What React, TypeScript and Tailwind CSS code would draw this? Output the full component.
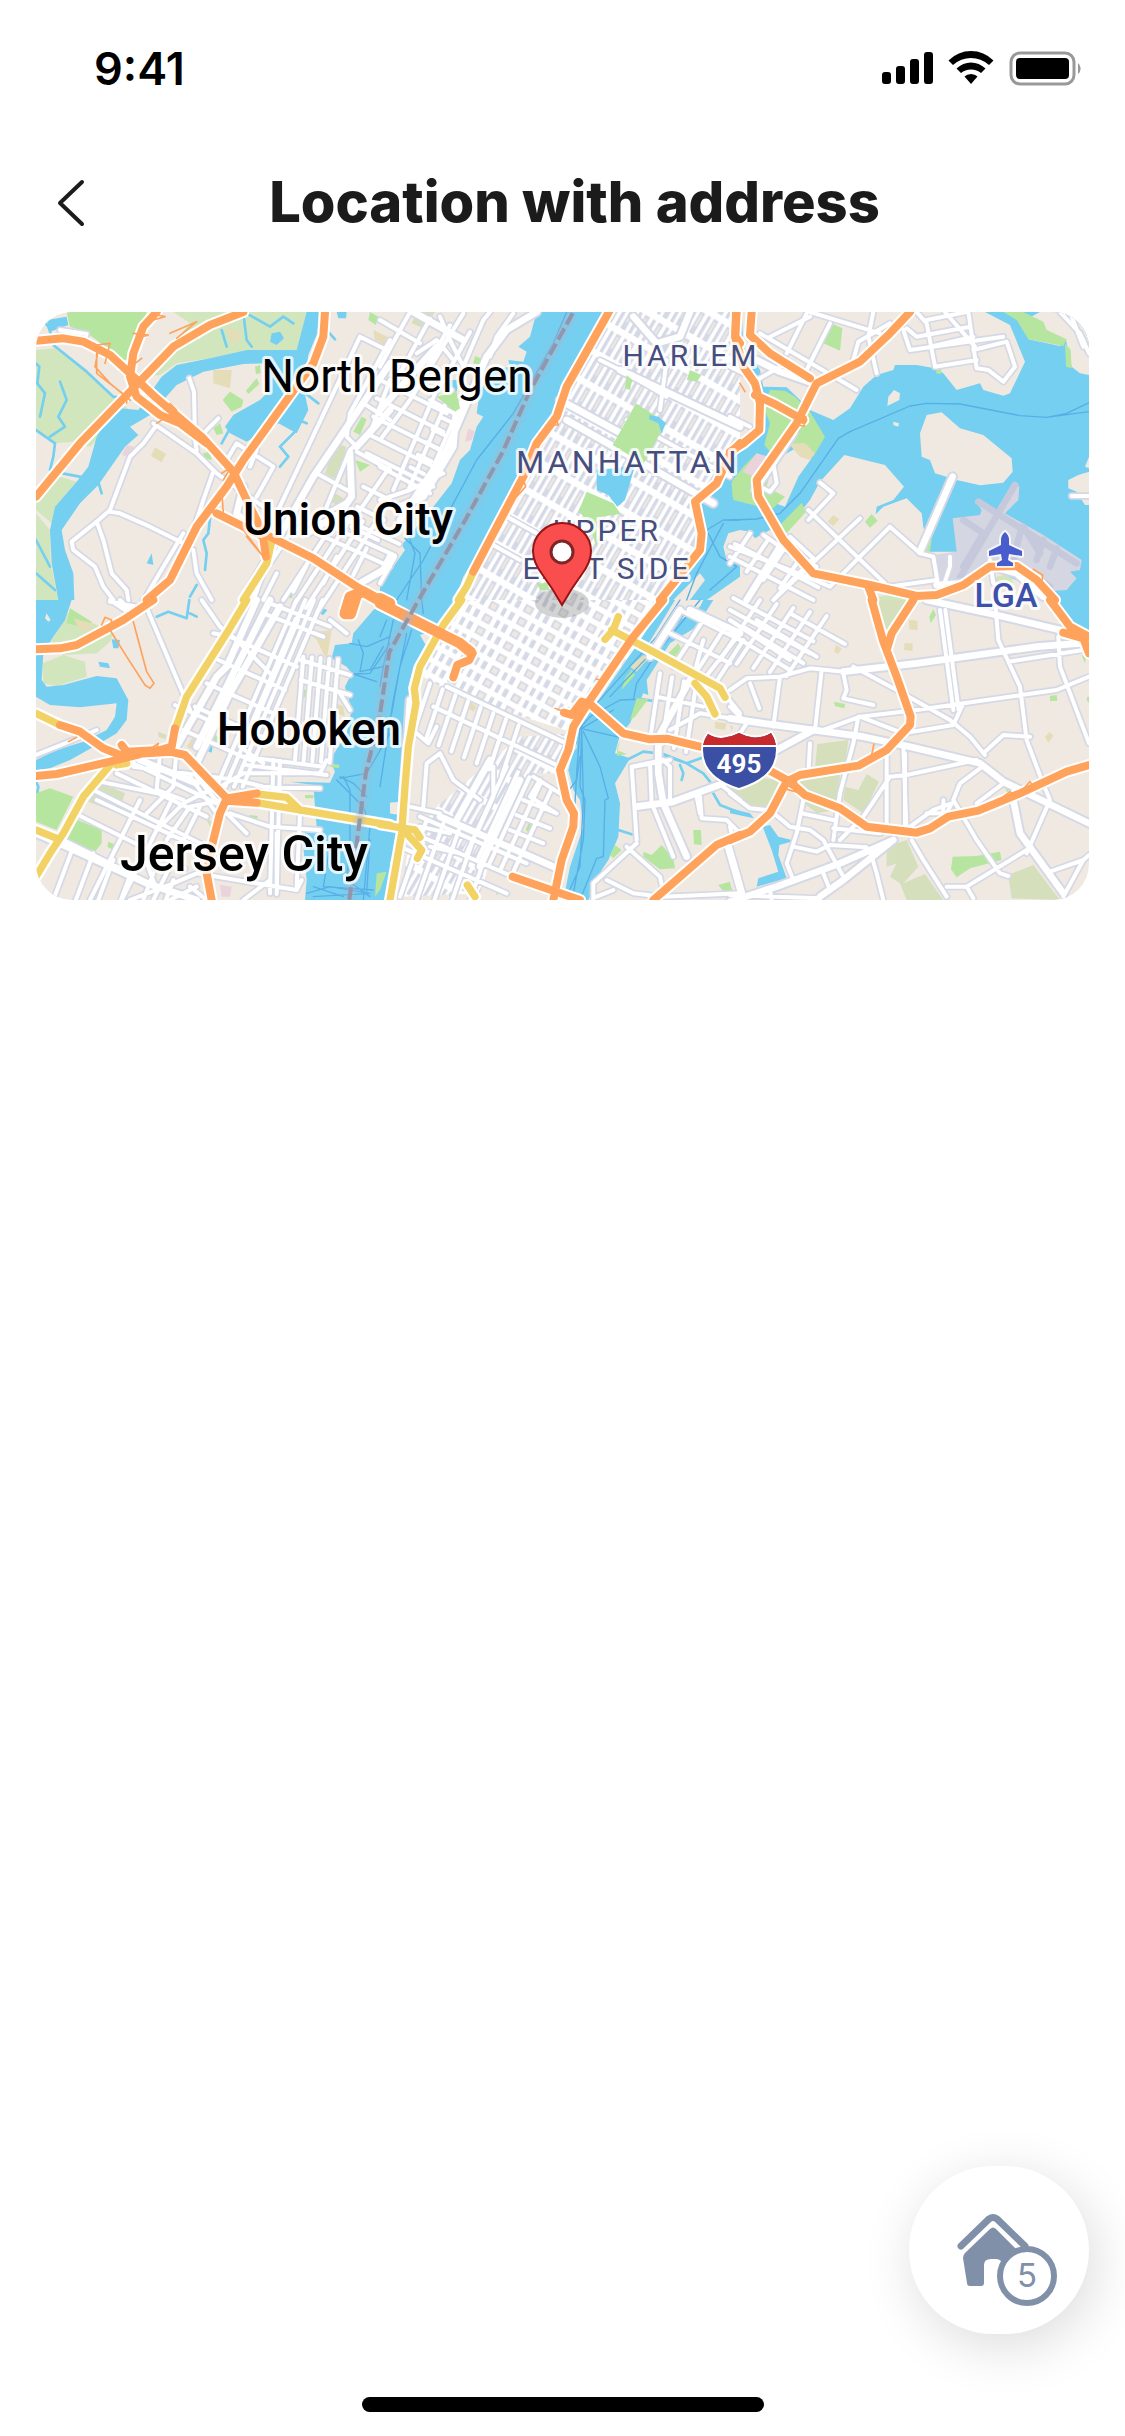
import React from 'react'

/* Parallel streets: x1, y1, x2, y2 of the first one, step dx, dy, and how many. */
type Hatch = [number, number, number, number, number, number, number]

type Tile = {
  x: number
  y: number
  water?: string
  creeks?: string[]
  land?: string
  green?: string
  pale?: string
  olive?: string
  sand?: string
  pink?: string
  apron?: string
  runways?: string[]
  blocks?: string
  midtown?: string
  channels?: string[]
  hatches?: Hatch[]
  streets?: string[]
  avenues?: string[]
  trunks?: string[]
  motorways?: string[]
  heavy?: string[]
  ramps?: string[]
}

const tiles: Tile[] = [
  {
    x: -18,
    y: -36,
    pale:
      'M18,150 75,145 180,220 260,300 300,330 210,410 180,440 130,425 75,430 18,390Z M430,36 600,36 850,36 800,150 650,150 540,175 440,190 390,225 340,230 420,140 480,70Z M18,560 90,530 140,545 75,620 65,670 18,630Z M18,640 60,690 62,790 85,900 18,900Z',
    green:
      'M110,36 350,36 320,130 300,180 265,180 200,120 165,95 120,80Z M600,275 640,300 635,320 605,335 578,300Z M680,235 688,252 655,282 648,272Z M1020,36 1045,50 1038,75 1015,60Z M995,350 1010,358 990,405 970,395Z M975,480 1020,495 990,515Z M550,385 570,370 580,400 560,405Z M520,460 540,455 545,480 522,475Z M675,200 690,195 692,220 678,222Z M775,880 790,882 785,895 770,893Z',
    olive: 'M915,430 948,440 930,545 885,520Z M900,570 940,595 930,618 888,600Z',
    sand: 'M550,210 605,210 600,265 550,250Z M375,442 408,462 395,487 363,468Z M1030,90 1080,115 1060,130 1035,120Z M590,75 635,100 620,130 600,125Z',
    pink: 'M290,435 312,440 300,470 275,465Z',
    water:
      'M830,36 H866 L862,100 835,165 820,260 835,330 800,400 745,370 700,395 650,425 600,400 585,380 610,345 690,300 720,270 705,240 700,190 640,192 520,215 440,255 400,300 360,345 300,380 325,405 285,440 240,505 205,555 150,610 95,690 105,750 130,820 133,900 85,900 65,790 60,690 75,620 140,545 175,500 200,410 240,345 270,325 325,330 360,280 395,230 440,195 540,175 650,150 800,150Z M50,60 110,50 115,75 60,95Z M725,100 750,95 762,115 740,135 720,125Z M920,36 H950 L948,55 925,55Z M365,760 370,795 350,790Z',
    creeks: [
      '70,135 170,215 250,290 300,300', '20,36 55,80 75,140', '18,190 28,200 22,250 45,280 30,350', '18,390 75,430 70,470 60,510', '70,515 160,532',
      '540,655 535,700 520,720 530,760 525,810', '795,395 750,440 775,470 750,500', '500,855 480,890', '90,245 110,300 85,350 105,380 60,410', '640,40 650,120 665,140',
      '18,720 60,800', '18,820 75,870', '200,530 215,580', '780,350 830,370', '800,260 865,310', '575,430 600,385', '590,140 575,90', '890,90 915,118', '650,40 720,80 760,50 790,70',
    ],
    hatches: [
      [930, 640, 760, 900, 34, 12, 4], [860, 700, 1080, 800, 14, -34, 3], [1000, 560, 1080, 600, -18, 60, 3], [740, 820, 700, 900, 90, -25, 4],
    ],
    streets: [
      '370,370 500,460 560,520 700,620', '380,375 340,430 300,470 240,630 200,665 125,725 130,750 195,800 220,860 250,900', '240,635 270,640 360,680 460,730',
      '478,235 492,275 495,420 500,450', '500,430 530,390 565,355', '548,520 520,600 490,690', '460,700 400,800 350,885', '200,665 220,720 245,820 290,870 295,900',
      '490,750 500,820 545,900', '680,590 730,500 620,430 590,480', '740,640 990,110 1070,150', '1080,120 960,340 950,410 980,440', '1000,310 1080,360', '860,520 960,575',
      '980,455 1080,510', '670,900 700,820 780,700 960,600', '1080,240 1020,400 960,450 890,620', '1080,500 990,630', '680,450 660,500', '90,90 170,102 160,125 80,110',
    ],
    avenues: ['1080,190 850,530 640,900', '960,460 965,590 930,640 830,700', '640,560 620,640 680,700', '1080,330 980,440', '990,850 1060,810 1080,770'],
    trunks: ['725,725 710,790 640,900'],
    motorways: [
      '18,122 100,115 160,125 240,165 300,220 380,295 520,415 610,515 650,600 700,700 850,775 980,860 1080,915', '640,36 540,75 430,140 310,265 150,430 18,590',
      '380,36 340,80 310,160 300,230 320,290 390,345 450,370 530,430', '885,36 880,110 850,190 640,480 590,560 500,680 420,840 350,900', '560,640 640,680 700,710', '700,715 708,770',
    ],
    heavy: ['1080,920 1000,875 960,890 945,940'],
    ramps: [
      '200,155 200,220 290,290 290,310', '205,150 195,200 240,250 300,300', '420,100 500,65 440,115', '310,100 355,105 320,115 330,85', '290,210 335,175', '380,370 440,330 420,310',
      '560,610 575,570 580,640 530,635', '650,710 700,770 640,690', '575,520 600,505 580,540', '200,135 240,130 225,190', '380,45 405,50 370,60',
    ],
  },
  {
    x: 1032,
    y: -36,
    water:
      'M470,36 H690 L640,120 560,260 525,350 470,430 430,520 340,700 275,790 250,830 225,900 H0 V830 L40,800 75,750 65,735 160,620 215,550 240,480 270,450 290,380 310,350 290,340 300,270 340,210 390,200 385,180 430,185 440,155 415,140 450,110Z M1080,450 1040,490 1000,570 955,605 975,720 940,790 880,870 860,900 H1080Z M205,240 235,240 230,275 205,270Z M1030,205 1060,225 1080,290 1040,230Z',
    land: 'M1080,690 1045,700 1030,740 1040,780 1080,790Z M880,900 960,820 975,840 930,900Z M980,900 1080,830 V900Z',
    sand: 'M0,100 20,120 15,145 0,130Z M845,36 H860 L850,60Z',
    pink: 'M265,385 285,395 275,420 255,425Z M1000,50 1030,50 1025,65 1000,62Z',
    olive: 'M110,36 165,36 130,85 95,70Z',
    blocks: 'M690,36 H1060 L1080,240 V450 L1040,480 1000,570 950,600 960,720 860,900 H230 L280,800 340,700 430,540 530,370 580,260Z',
    channels: [
      '560,36 520,130 400,340 290,480 215,620 130,780 50,900', '75,715 120,760 125,900', '90,720 105,760 80,900', '1080,660 1030,660 980,690 960,740', '985,700 1020,770 1070,800 990,870', '1030,670 950,820 920,900',
    ],
    hatches: [
      [90, 36, 0, 200, 60, 20, 4], [0, 240, 200, 340, -10, 55, 5], [260, 270, 130, 570, -45, 0, 3], [180, 350, 220, 370, -22, 38, 5],
    ],
    streets: [
      '180,50 210,120 250,200 310,60 330,36', '110,160 170,120 220,180', '0,420 90,300 250,40', '0,500 150,580', '0,600 90,570 190,520', '150,300 240,350', '0,60 120,130', '400,40 350,110 330,170',
      '45,770 0,850', '380,650 470,700', '330,730 420,780', '740,360 1050,530', '660,180 740,220 860,290', '860,180 840,330',
    ],
    avenues: ['470,36 380,90 320,170 200,450 60,660', '230,310 220,440 130,590 60,620', '0,330 170,140', '100,36 250,120', '760,50 830,130 900,110 930,36', '720,210 1080,380', '560,360 1000,610', '540,300 760,420'],
    trunks: ['280,815 260,860 235,900'],
    motorways: ['690,30 560,260 530,350 470,430 430,530 340,700 280,815', '1068,36 1066,110 1080,130', '1080,430 1050,460 1010,550 945,605 965,700 960,750 840,900'],
    heavy: ['0,895 30,910'],
    ramps: ['425,520 437,560 410,590', '530,360 535,375 520,375'],
  },
  {
    x: 2082,
    y: -36,
    water:
      'M765,36 840,75 885,185 840,280 820,287 760,270 750,250 680,270 640,220 615,205 560,195 495,195 490,210 440,225 400,260 360,325 310,360 240,330 200,290 170,262 100,260 90,210 60,160 40,140 35,36 18,36 25,190 60,230 90,300 88,390 0,450 V690 L30,690 60,695 75,715 120,690 165,695 240,600 270,545 343,465 465,495 522,560 490,600 440,620 437,643 460,620 530,595 575,640 580,680 600,755 680,755 900,860 975,900 H1077 V36Z M0,790 15,820 0,850Z',
    land:
      'M590,345 635,337 690,385 760,405 845,475 848,515 820,548 750,556 680,540 615,520 600,480 575,470 570,400Z M475,290 492,270 510,280 508,300 472,318Z M490,365 507,370 505,380 490,375Z M885,60 930,36 H1077 V225 L1050,220 1025,200 1008,120 990,138 895,118Z M1077,470 1065,500 1077,505Z M1077,515 1045,525 1015,540 1015,565 1040,575 1065,615 H1077Z M135,480 205,440 245,475 205,530 165,620 110,600 90,560Z',
    green:
      'M820,36 H880 L940,65 950,90 1010,118 1000,138 895,118 860,60Z M310,72 337,85 330,152 280,130Z M120,270 165,272 195,290 240,335 285,410 250,470 200,430 130,440 120,455 103,435 120,370 100,320Z M5,545 40,500 80,460 130,480 110,560 165,590 130,625 90,620 10,600Z M215,608 228,635 170,700 130,695Z M425,642 443,662 420,683 405,665Z M590,700 605,720 600,755 580,755Z M1005,130 1022,150 1025,205 1008,200Z M620,208 635,208 632,222 618,220Z M0,410 20,405 25,425 0,440Z',
    pale: 'M440,890 520,880 540,900 450,900Z M800,830 840,820 850,850 790,850Z',
    sand: 'M175,430 225,430 255,460 240,480 210,470Z M310,645 328,658 310,678 293,665Z M1050,222 1077,220Z',
    pink: 'M80,460 115,470 70,530 38,515Z',
    apron:
      'M668,655 750,645 755,630 740,610 750,598 800,630 850,545 868,560 865,600 825,640 940,705 1055,780 1050,810 1020,815 1040,835 1010,870 975,872 880,800 780,800 690,860 630,865 610,765 680,755Z',
    runways: ['855,555 680,850', '745,605 1040,790', '700,660 760,700 700,800', '870,700 850,780 960,860', '880,680 930,760', '940,720 920,780', '980,745 960,800'],
    channels: ['0,660 80,657 150,640 210,580 325,415 360,395 540,318 590,310 690,312 870,347 950,352 1077,335', '950,352 1010,340 1077,308'],
    hatches: [
      [0, 790, 60, 700, 50, 25, 4], [0, 770, 250, 900, 15, -38, 2],
    ],
    streets: [
      '240,36 450,100', '240,50 120,110', '300,70 230,210', '230,40 170,160', '90,100 380,270', '430,36 415,110 440,220', '370,180 385,125 480,70', '520,90 540,150 820,110', '560,36 590,70 615,200 740,180',
      '530,85 560,110 720,80', '590,60 710,36', '715,36 740,205 775,210 820,245 855,200 830,125 730,150', '645,36 735,140', '600,140 730,110', '990,36 1050,100 1077,160', '1020,36 1060,140', '270,548 310,580 235,660', '390,655 130,900', '235,630 475,860 620,840',
      '100,705 150,740 260,800', '180,710 250,775 130,900', '480,680 570,760 610,770 625,860', '478,682 300,860', '1025,588 1077,588', '0,740 230,830 300,860', '0,200 80,240 170,190', '130,490 140,550 120,575 100,565', '660,770 660,800 640,860', '780,780 790,850 830,860', '0,350 60,380',
    ],
    avenues: ['80,180 150,215 235,245', '668,530 570,755', '190,400 75,570', '150,740 50,900', '620,855 700,850 790,800 860,820 940,890'],
    motorways: [
      '20,36 15,110 40,200 75,250 90,310 88,390 40,430 0,455', '65,36 60,105 120,160 240,235', '540,36 480,100 390,185 260,250 200,370 80,540 85,590 160,720 250,820 420,855 560,888 620,885 700,855 780,800 860,798 920,840 975,900', '75,285 130,310 220,360', '415,860 430,900',
    ],
    ramps: ['190,350 228,350 222,378 200,375', '910,808 938,825 935,860', '30,250 45,275'],
  },
  {
    x: -18,
    y: 864,
    water:
      'M18,0 H125 L105,60 70,110 40,160 35,240 50,260 100,255 200,228 260,235 295,300 290,360 260,400 210,430 120,480 60,505 18,510 V480 L80,450 160,425 230,390 255,350 260,310 150,322 60,315 18,290Z M1080,0 1030,30 970,100 965,130 915,135 905,175 950,200 965,220 945,260 965,330 950,400 900,480 915,515 900,548 780,545 850,555 855,620 860,680 815,690 820,740 830,840 825,900 H1080Z M245,118 270,120 265,145 250,145Z M205,185 235,190 240,205 210,200Z M535,425 550,430 545,458 525,450Z M870,20 892,30 880,45 862,38Z',
    creeks: ['380,50 415,35 470,55 478,0', '480,40 500,50', '18,545 25,560 18,600'],
    land: 'M50,40 62,60 55,65 45,55Z',
    pale: 'M120,30 190,70 250,100 240,125 200,160 100,165 60,130Z M100,165 165,185 170,230 80,258 40,250 38,190Z',
    green: 'M120,25 185,65 180,85 110,70Z M18,580 60,565 130,590 80,690 18,665Z M120,650 215,690 215,730 195,755 110,715Z M690,222 705,240 685,235Z M815,268 830,270 825,292 812,290Z M550,395 570,420 555,430 540,415Z M590,640 605,635 605,650 590,650Z M658,645 683,648 680,660 658,658Z M440,872 455,885 440,900 422,890Z M900,490 930,495 925,505 900,500Z M825,585 850,585 850,595 825,595Z M235,725 258,735 250,750 232,740Z M945,262 955,285 965,290 945,300Z M1040,820 1070,815 1050,870 1035,890Z M485,325 497,318 497,328Z',
    sand: 'M495,400 520,415 500,455 470,440Z M920,310 940,320 945,350 920,340Z M130,55 185,70 180,95 150,90Z M835,100 905,90 890,180 860,120Z',
    olive: 'M215,550 285,580 265,640 175,605Z M385,395 410,405 405,418 385,410Z M530,660 560,665 545,690Z',
    pink: 'M570,855 605,860 600,890 575,890Z',
    channels: [
      '1080,130 1020,220 970,222', '970,222 1040,245', '985,120 1000,160 990,215 1060,200', '960,130 1010,140 1080,110', '930,530 970,550 1010,590', '920,540 1000,620 1020,680 1000,900', '940,530 960,570 960,720', '1080,400 1010,520 930,535', '830,880 900,860 1020,880 850,890', '900,740 880,860 1030,870', '960,740 950,840 1020,890', '1020,720 1010,880', '850,860 940,890', '1060,140 1020,210',
    ],
    hatches: [
      [820, 170, 795, 480, 26, 2, 5], [812, 180, 960, 225, 0, 60, 2], [800, 0, 560, 560, 26, 0, 4], [600, 110, 800, 200, -35, 70, 5], [640, 470, 880, 500, 10, 25, 2], [130, 740, 70, 900, 60, 20, 6],
      [100, 720, 420, 880, 45, -75, 3], [700, 40, 880, 110, 20, -30, 2], [330, 600, 180, 900, 90, 10, 3], [290, 480, 560, 610, -30, 40, 2], [730, 480, 720, 880, 20, 2, 2],
    ],
    streets: [
      '340,0 480,330', '515,0 570,80 620,120 720,220', '550,100 600,110', '435,315 600,390', '18,465 130,420 200,390', '240,0 300,40', '240,5 320,20', '270,0 300,30', '390,460 380,570 460,600', '440,450 430,560 350,640', '500,530 590,640 650,700', '310,500 620,540 700,560 870,565', '600,640 720,680 870,690', '480,530 560,640', '570,560 640,520 870,520 890,480', '630,440 700,490',
      '380,690 460,610 560,560', '410,720 480,620 580,600', '210,545 430,590', '200,600 500,740', '300,900 430,850 500,820 800,870 815,840', '340,760 380,870', '420,900 500,860', '810,640 800,860', '740,700 740,860', '480,860 530,900', '930,280 960,330', '640,900 720,840', '900,60 950,100',
    ],
    avenues: ['680,0 590,200 560,230 440,440', '720,0 500,440', '800,60 640,440', '18,700 110,740 350,850 500,900', '750,20 600,280 500,490', '330,480 500,550'],
    trunks: ['650,0 590,100 470,290 435,390', '18,340 90,375', '245,490 160,590 100,700 60,760 18,830', '18,690 80,715', '680,582 770,592 810,630', '680,608 840,635 1080,675', '260,495 290,490'],
    motorways: ['370,0 280,60 140,135 90,145 18,148', '90,375 150,395 220,445 270,465 420,455 465,465 590,595 570,640 545,740 530,820 545,900', '18,528 80,522 240,485 340,460', '435,385 425,440 390,450 290,455 275,435', '590,595 680,580', '590,602 680,608'],
    heavy: ['960,-8 945,42 962,42 978,-8', '1060,12 1080,20'],
    ramps: ['215,75 225,52 245,60 240,90 290,170 345,255 360,265 372,250 350,215 310,65', '370,440 385,430 380,445', '115,425 140,412'],
  },
  {
    x: 1032,
    y: 864,
    water:
      'M0,0 H240 L200,60 150,95 120,105 140,140 100,200 85,260 90,330 80,440 65,520 60,605 25,608 25,640 60,645 60,700 40,760 20,820 0,818Z M1000,0 860,0 760,150 650,310 600,380 565,510 580,570 600,600 610,680 570,800 550,900 H625 L665,810 685,780 715,710 720,610 705,550 750,475 705,460 720,405 750,370 790,280 805,285 800,240 870,130 950,80Z',
    creeks: ['740,480 790,455 850,462 920,490 970,520 990,545', '850,465 920,490 990,465', '900,495 910,520 905,540', '1000,580 1020,615 1080,638', '770,295 820,303', '715,690 755,703'],
    land: 'M885,0 970,0 960,20 900,60 840,150 800,140Z',
    sand: 'M790,165 805,175 770,215 750,200Z M220,580 290,620 260,670 200,640Z M270,305 290,320 280,335 262,322Z M1005,365 1040,370 1035,390 1005,385Z',
    green: 'M755,210 765,225 725,270 735,235Z M770,295 805,297 765,350 750,360Z M720,420 710,450 740,462 710,468Z M895,130 903,145 885,170 865,160Z M845,735 880,775 885,805 840,808 790,770 790,755 815,765Z M940,690 963,690 965,735 942,733Z M1015,855 1050,845 1055,870 1030,875Z M225,580 270,595 260,620 218,605Z M450,660 465,668 450,700 437,690Z M705,735 725,750 700,775 690,765Z M420,205 438,215 430,222Z M340,495 330,530 320,525Z M640,840 635,870 625,890Z M210,855 220,880 210,890 200,870Z M345,865 365,875 350,885Z',
    midtown: 'M270,0 H860 L760,150 640,310 600,380 585,400 240,290 165,250 110,220 125,160 200,80Z',
    blocks: 'M420,410 585,400 570,470 545,520 470,520 500,470 350,720 300,880 60,890 90,720 170,620Z',
    channels: [
      '600,385 590,520 580,700', '605,390 600,560 615,600 610,720 580,880', '605,390 610,600 600,800 560,890', '610,395 660,500 685,595 675,600 670,770 650,775 600,900', '600,385 630,350 720,300 765,298', '605,385 700,330', '600,385 720,412', '650,310 830,110 900,0', '690,290 860,110 930,20', '760,300 770,250 830,160 960,0', '560,580 590,540 600,470',
      '40,60 10,200 0,260', '20,60 0,110', '80,100 40,300 0,560', '95,90 60,200 35,340', '125,0 130,40',
    ],
    hatches: [
      [150, 250, 100, 400, 38, 18, 8], [160, 320, 540, 500, 40, -60, 2], [380, 500, 260, 760, 34, 16, 5], [90, 620, 180, 640, 30, 60, 3], [140, 660, 60, 890, 50, 10, 5], [60, 740, 380, 880, 30, -45, 3], [430, 600, 530, 640, -20, 45, 4],
      [840, 220, 810, 420, 36, 12, 4], [760, 500, 870, 480, 0, 0, 1], [970, 60, 880, 200, 60, 30, 3], [900, 30, 1080, 120, -30, 70, 3],
    ],
    streets: [
      '180,460 140,490 130,620', '180,460 220,540 300,600', '340,500 340,590 290,700', '460,530 540,580', '110,400 145,430 170,380', '755,500 770,720', '755,500 850,480 870,500 870,610', '810,490 815,610 880,770', '770,620 880,610', '770,730 640,850 640,900', '740,740 840,830 850,880', '960,590 965,655 1040,660 1080,700',
      '850,890 1080,880', '680,840 760,880 850,890', '950,590 960,640', '1040,740 1080,880', '830,290 970,320', '970,120 940,230', '1080,100 970,240', '870,390 960,340 1080,360', '1030,560 1080,600', '480,540 450,590 530,640', '700,870 650,890', '1040,290 1080,340',
    ],
    avenues: ['180,650 520,800', '835,420 835,520 850,610 920,770', '770,620 880,605 1030,550', '930,240 830,420', '900,30 810,170', '420,540 300,800', '330,480 230,660', '90,300 70,600', '930,30 1080,100'],
    trunks: ['245,0 190,75 120,200 103,265 108,310 85,440 75,560 65,700 30,900', '0,673 60,683 105,690 120,712', '70,690 125,750 112,775', '715,50 700,90 675,118', '695,90 820,155 1020,265 1035,292', '945,250 980,290 1005,342', '262,855 285,890'],
    motorways: ['278,160 268,180 232,195 220,232', '850,0 760,110 630,300 580,380 565,450 540,510 560,600 582,640 580,680 545,780 520,900', '552,338 575,345 605,305 630,312 730,400 810,418 860,416 960,440', '398,830 600,900', '1080,705 1010,735 820,900'],
    heavy: ['0,10 90,55 240,130 272,156'],
    ramps: ['525,325 545,332', '648,237 662,240'],
  },
  {
    x: 2082,
    y: 864,
    water: 'M975,0 H1077 V95 L1020,75Z M0,625 60,640 72,655 0,640Z M98,680 120,675 145,710 195,722 148,735 145,765 170,835 80,860 85,835 145,815 125,750Z',
    olive: 'M445,0 530,0 480,100 455,80Z M262,432 355,420 345,500 255,500Z M210,530 330,525 320,630 260,640 210,600Z M0,560 60,530 150,540 110,625 60,632 10,580Z M345,560 385,570 410,522 447,545 420,600 400,640 340,600Z M470,740 530,720 565,800 520,850 585,822 640,900 530,900 510,850 480,830 500,790 470,800Z M835,825 910,795 990,900 845,895Z',
    green: 'M668,770 740,768 810,755 815,780 720,805 680,832 663,808Z M312,305 345,312 343,325 315,318Z M670,605 677,625 655,628Z M960,288 980,285 982,302 960,303Z M1072,290 H1077 V308 L1070,300Z M610,28 618,45 602,70 598,50Z M1055,165 1068,170 1065,190Z M0,855 8,870 0,875Z M825,565 840,570 835,580Z',
    sand: 'M537,60 562,62 563,90 537,88Z M523,130 548,130 548,153 523,150Z M318,135 335,145 325,162 312,155Z M960,395 970,408 955,428 945,410Z M0,375 10,380 5,395Z',
    pink: 'M650,345 665,348 660,358 645,355Z',
    hatches: [
      [90, 0, -30, 180, 50, 12, 5], [0, 30, 240, 160, 10, -36, 2], [0, 100, 180, 210, 40, -20, 3], [630, 30, 670, 330, 16, 0, 2], [470, 460, 470, 680, 55, 0, 2],
    ],
    streets: [
      '0,270 50,235 150,230 240,205 340,215', '180,40 345,132', '0,60 180,180', '150,230 130,380', '275,210 255,390', '340,220 350,270 340,295 430,315', '60,250 88,325', '370,200 500,270 660,360 720,410 765,465', '280,390 390,350 560,330 980,270 1077,230', '390,350 520,400 670,375 700,310',
      '385,350 370,430 330,580 310,720', '795,0 805,120 870,260 890,420 935,540 960,600 890,760', '985,110 990,200 1077,430', '835,185 1060,150', '760,460 820,405 900,410', '530,700 520,440', '480,530 530,525 740,480', '480,530 400,650 330,720', '750,505 690,550 670,600 740,720 810,820 835,828', '540,680 610,630 665,610 650,640', '740,610 820,550', '545,720 580,780 650,890', '890,750 710,860 650,860', '710,860 730,895',
      '960,815 1060,780 1077,765', '1060,780 1000,890', '120,630 180,680 240,690 280,720 340,830', '220,600 200,700 170,790 190,840', '215,640 310,660', '190,740 260,755 300,735 410,742', '310,685 450,700', '0,580 60,625 110,630', '420,750 440,820 460,900', '0,740 40,880', '240,430 235,520', '280,820 300,870', '0,680 10,720', '0,885 270,895', '120,870 125,900', '590,640 640,640 640,600', '0,320 50,370 30,400',
    ],
    avenues: ['0,355 100,370 400,410 540,440 750,490 820,545 1077,670', '340,215 560,190 920,140 1050,130', '590,0 800,45 990,90', '850,600 870,700 1000,880', '490,720 330,790 140,860 0,905', '490,720 340,840 270,890', '140,450 250,390'],
    motorways: ['425,0 460,125 500,230 542,350 540,375 470,450 385,497 210,525 170,545 120,640 60,695 0,720', '550,0 485,100 470,150', '120,512 180,545 225,585 330,625 410,680 560,698 600,685 655,650 745,632 870,580 1010,515 1077,495', '960,0 1020,80 1077,110', '1000,98 1060,115 1077,160'],
    ramps: ['820,590 840,575 860,590 900,545 910,560', '432,432 425,465', '150,540 200,545 160,565 215,580 170,555', '170,530 190,565'],
  },
]

const path = (points: string) => `M${points}`
const hatchPath = ([x1, y1, x2, y2, dx, dy, n]: Hatch) =>
  Array.from({ length: n }, (_, i) => `M${x1 + dx * i},${y1 + dy * i} ${x2 + dx * i},${y2 + dy * i}`).join(' ')

const minorPaths = (t: Tile) => [...(t.streets ?? []).map(path), ...(t.hatches ?? []).map(hatchPath)].join(' ')
const join = (lines?: string[]) => (lines ?? []).map(path).join(' ')

const stateLine = 'M1610,4 1480,240 1400,420 1290,620 1150,860 1060,1020 1030,1220 990,1380 940,1764'

function Layer({ d, className }: { d: (t: Tile) => string | undefined; className: string }) {
  return (
    <g className={className} strokeLinecap="round" strokeLinejoin="round">
      {tiles.map((t) => {
        const shape = d(t)
        return shape ? <path key={`${t.x},${t.y}`} d={shape} transform={`translate(${t.x} ${t.y})`} /> : null
      })}
    </g>
  )
}

function MapLabel({ x, y, className, children }: { x: number; y: number; className: string; children: React.ReactNode }) {
  return (
    <text x={x} y={y} textAnchor="middle" paintOrder="stroke" strokeLinejoin="round" className={`stroke-white/80 stroke-6 ${className}`}>
      {children}
    </text>
  )
}

function CityMap() {
  return (
    <svg viewBox="0 0 1053 588" className="block w-full rounded-[36px] bg-[#efe9e2] font-['Roboto',sans-serif]" role="img" aria-label="Map of New York">
      <defs>
        <pattern id="uptown" width="46" height="92" patternUnits="userSpaceOnUse" patternTransform="rotate(30)">
          <rect width="46" height="92" fill="#fff" />
          <rect x="3" y="8" width="10" height="72" fill="#d5d8e5" />
          <rect x="22" y="8" width="16" height="72" fill="#d5d8e5" />
          <rect x="27" y="16" width="6" height="40" fill="#efe9e2" />
        </pattern>
        <pattern id="midtown" width="96" height="42" patternUnits="userSpaceOnUse" patternTransform="rotate(29)">
          <rect width="96" height="42" fill="#fff" />
          <rect x="6" y="7" width="28" height="25" fill="#d5d8e5" />
          <rect x="12" y="12" width="16" height="15" fill="#efe9e2" />
          <rect x="48" y="7" width="12" height="25" fill="#d5d8e5" />
          <rect x="73" y="7" width="14" height="25" fill="#d5d8e5" />
        </pattern>
        <filter id="glow" x="-50%" y="-50%" width="200%" height="200%">
          <feGaussianBlur stdDeviation="6" />
        </filter>
      </defs>

      <g transform="scale(0.33333)" fill="none">
        <Layer d={(t) => t.pale} className="fill-[#d2e6bd]" />
        <Layer d={(t) => t.water} className="fill-[#75cff0]" />
        <Layer d={(t) => join(t.creeks)} className="stroke-[#75cff0] stroke-8" />
        <Layer d={(t) => t.land} className="fill-[#efe9e2]" />
        <Layer d={(t) => t.olive} className="fill-[#d5dfbc]" />
        <Layer d={(t) => t.green} className="fill-[#b5e59e]" />
        <Layer d={(t) => t.sand} className="fill-[#e5dcb8]" />
        <Layer d={(t) => t.pink} className="fill-[#ead3da]" />
        <Layer d={(t) => t.apron} className="fill-[#d4d7e2]" />
        <Layer d={(t) => join(t.runways)} className="stroke-[#c6c9dc] stroke-20" />
        <Layer d={(t) => t.blocks} className="fill-[url(#uptown)]" />
        <Layer d={(t) => t.midtown} className="fill-[url(#midtown)]" />
        <Layer d={(t) => join(t.channels)} className="stroke-[#58aee6] stroke-4" />
        <Layer d={(t) => minorPaths(t)} className="stroke-[#d5d8e5] stroke-22" />
        <Layer d={(t) => join(t.avenues)} className="stroke-[#d5d8e5] stroke-32" />
        <Layer d={(t) => minorPaths(t)} className="stroke-white stroke-12" />
        <Layer d={(t) => join(t.avenues)} className="stroke-white stroke-20" />

        {/* Central Park and its reservoir */}
        <g transform="translate(1032 -36)">
          <path d="M768,310 858,368 790,492 698,435Z M620,575 700,610 722,642 650,652 650,745 625,660 595,635Z M740,225 757,240 750,270 735,265Z M930,210 965,225 950,245 920,240Z M470,850 500,850 510,870 480,870Z M285,168 302,175 295,195 280,190Z M170,290 230,275 240,325 225,335Z M1080,530 1055,550 1058,590 1080,600Z" fill="#b5e59e" />
          <path d="M650,510 765,498 735,600 712,620 685,585 650,570Z M808,345 835,350 858,370 845,400 835,370 808,358Z" fill="#75cff0" />
        </g>

        <Layer d={(t) => join([...(t.motorways ?? []), ...(t.trunks ?? [])])} className="stroke-white stroke-36" />
        <Layer d={(t) => join(t.heavy)} className="stroke-white stroke-44" />
        <Layer d={(t) => join(t.trunks)} className="stroke-[#f2d264] stroke-22" />
        <Layer d={(t) => join(t.ramps)} className="stroke-[#ffa35c] stroke-5" />
        <Layer d={(t) => join(t.motorways)} className="stroke-[#ffa35c] stroke-24" />
        <Layer d={(t) => join(t.heavy)} className="stroke-[#ffa35c] stroke-32" />

        {/* State line along the Hudson */}
        <path d={stateLine} stroke="#a9b6cc" strokeOpacity="0.5" strokeWidth="26" filter="url(#glow)" />
        <path d={stateLine} stroke="#9096ab" strokeWidth="12" strokeDasharray="38 14" />
      </g>

      <MapLabel x={361} y={80} className="fill-black text-[46px]">North Bergen</MapLabel>
      <MapLabel x={312} y={223} className="fill-black text-[46px] font-medium">Union City</MapLabel>
      <MapLabel x={273} y={433} className="fill-black text-[46px] font-medium">Hoboken</MapLabel>
      <MapLabel x={208} y={559} className="fill-black text-[50px] font-medium">Jersey City</MapLabel>
      <MapLabel x={655} y={54} className="fill-[#464e80] text-[30px] tracking-widest">HARLEM</MapLabel>
      <MapLabel x={592} y={161} className="fill-[#464e80] text-[32px] tracking-widest">MANHATTAN</MapLabel>
      <MapLabel x={571} y={229} className="fill-[#464e80] text-[30px] tracking-widest">UPPER</MapLabel>
      <MapLabel x={571} y={267} className="fill-[#464e80] text-[30px] tracking-widest">EAST SIDE</MapLabel>
      <MapLabel x={970} y={295} className="fill-[#3d50ab] text-[34px] font-medium">LGA</MapLabel>

      {/* Airport symbol */}
      <path
        d="M969,220 Q973,223 973,228 V233 L986,239 V244 L973,242 L972,248 L977,251 V254 H961 V251 L966,248 L965,242 L953,244 V239 L965,233 V228 Q965,223 969,220Z"
        className="fill-[#485ccb] stroke-white/80 stroke-4"
        paintOrder="stroke"
        strokeLinejoin="round"
      />

      {/* Interstate shield */}
      <g>
        <path d="M672,422 Q682,428 691,425 Q697,424 703,421 Q709,424 715,425 Q726,427 735,421 Q740,428 740,438 Q740,465 703,476 Q667,465 667,438 Q667,429 672,422Z" className="fill-[#3b4fa5] stroke-white stroke-4" paintOrder="stroke" />
        <path d="M672,422 Q682,428 691,425 Q697,424 703,421 Q709,424 715,425 Q726,427 735,421 Q739,427 740,433 H667 Q668,427 672,422Z" fill="#c8292d" />
        <path d="M667,434H740" className="stroke-white stroke-2" />
        <text x="703" y="461" textAnchor="middle" className="fill-white text-[26px] font-bold">495</text>
      </g>

      {/* Selected place */}
      <ellipse cx="526" cy="291" rx="27" ry="15" fill="#777" fillOpacity="0.32" />
      <path d="M526,293 Q517,277 506,262 Q497,250 497,239 A29,28 0 0 1 555,239 Q555,250 546,262 Q535,277 526,293Z" fill="#fa4e4e" stroke="#971414" strokeWidth="2" />
      <circle cx="526" cy="240" r="11" fill="#fff" stroke="#7e2525" strokeWidth="3" />
    </svg>
  )
}

function StatusBar() {
  return (
    <div className="flex h-[132px] items-center justify-between pt-1 pr-[42px] pl-[94px] text-black">
      <span className="text-[45px] leading-none font-semibold">9:41</span>
      <svg viewBox="0 0 201 36" className="h-9 w-[201px]" aria-label="Signal, Wi-Fi and battery">
        <path d="M3 22h3a3 3 0 013 3v6a3 3 0 01-3 3H3a3 3 0 01-3-3v-6a3 3 0 013-3zM17 16h3a3 3 0 013 3v12a3 3 0 01-3 3h-3a3 3 0 01-3-3V19a3 3 0 013-3zM31 9h3a3 3 0 013 3v19a3 3 0 01-3 3h-3a3 3 0 01-3-3V12a3 3 0 013-3zM45 2h3a3 3 0 013 3v26a3 3 0 01-3 3h-3a3 3 0 01-3-3V5a3 3 0 013-3z" />
        <path d="M66.500 10.500Q76 1 89 1T111.500 10.500L107 15Q99 8 89 8T71 15ZM74.500 18.500Q81 12.500 89 12.500T103.500 18.500L99 23Q95 19.500 89 19.500T79 23ZM82.500 26.500Q85 24 89 24T95.500 26.500L89 34Z" />
        <rect x="129" y="3" width="63" height="31" rx="9" fill="none" stroke="#999" strokeWidth="3" />
        <rect x="134" y="8" width="53" height="21" rx="4" />
        <path d="M196 13a7 7 0 010 11z" fill="#999" />
      </svg>
    </div>
  )
}

export default function App() {
  return (
    <div className="flex min-h-screen flex-col bg-white font-['Inter',sans-serif]">
      <StatusBar />
      <header className="grid grid-cols-[72px_1fr_48px] items-center px-9 pt-6 pb-[60px]">
        <button type="button" aria-label="Back" className="flex h-24 items-center pl-5">
          <svg viewBox="0 0 30 50" className="h-[50px] w-[30px]" fill="none" stroke="#1c1c1c" strokeWidth="4" strokeLinecap="round" strokeLinejoin="round">
            <path d="M26 3 4 24l22 21" />
          </svg>
        </button>
        <h1 className="pb-1 text-center text-[56px] leading-none font-extrabold whitespace-nowrap text-[#1b1b1b]">Location with address</h1>
      </header>

      <main className="flex-1 px-9">
        <CityMap />
      </main>

      <div className="flex justify-end px-9">
        <button
          type="button"
          aria-label="Home, 5 items"
          className="flex h-[168px] w-[180px] items-center justify-center rounded-[84px] bg-white shadow-[6px_12px_54px_rgba(0,0,0,0.14)]"
        >
          <svg viewBox="0 0 180 168" className="h-full w-full">
            <path d="M52,80 80,53Q84,50 88,53L116,80" fill="none" stroke="#8090a8" strokeWidth="7" strokeLinecap="round" />
            <path d="M81,63Q84,60 87,63L109,85 110,117Q110,120 107,120H96Q93,120 93,117V99Q93,93 87,93H82Q75,93 75,99V117Q75,120 72,120H61Q58,120 58,117L54,92Q54,89 56,87Z" fill="#8090a8" />
            <circle cx="118" cy="110" r="27" fill="#fff" stroke="#8090a8" strokeWidth="6" />
            <text x="118" y="121" textAnchor="middle" className="fill-[#8090a8] text-[33px]">5</text>
          </svg>
        </button>
      </div>
      <div className="flex h-[102px] items-end justify-center pb-6">
        <div className="h-[15px] w-[402px] rounded-full bg-black" />
      </div>
    </div>
  )
}
